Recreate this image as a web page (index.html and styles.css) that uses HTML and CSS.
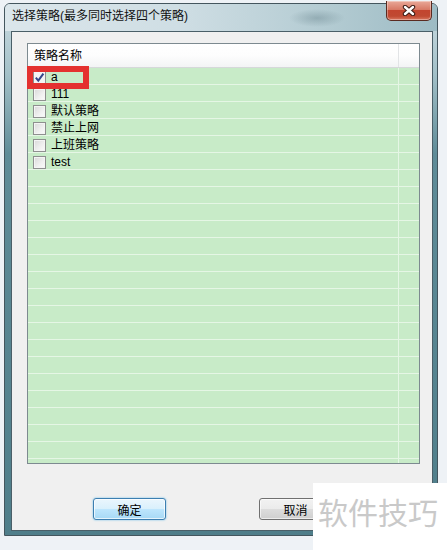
FILE: index.html
```html
<!doctype html>
<html>
<head>
  <meta charset="UTF-8">
  <title>选择策略</title>
  <link rel="stylesheet" href="styles.css">
</head>
<body>
  <div class="window">
    <div class="titlebar">
      <span class="title">选择策略(最多同时选择四个策略)</span>
      <button class="close" title="关闭">
        <svg width="14" height="11" viewBox="0 0 14 11">
          <path d="M3 2 L11 9 M11 2 L3 9" stroke="#3a1a14" stroke-width="4.4" stroke-linecap="round"/>
          <path d="M3 2 L11 9 M11 2 L3 9" stroke="#fff" stroke-width="2.4" stroke-linecap="round"/>
        </svg>
      </button>
    </div>
    <div class="client">
      <div class="list">
        <div class="list-head">
          <span class="col-name">策略名称</span>
          <span class="col-rest"></span>
        </div>
        <div class="list-body">
          <ul class="rows">
            <li class="row"><span class="check checked"><svg width="11" height="11" viewBox="0 0 11 11"><path d="M1.8 5.6 L4.3 8.6 L9.4 1.6" fill="none" stroke="#34478a" stroke-width="2"/></svg></span><span class="name">a</span></li>
            <li class="row"><span class="check"></span><span class="name">111</span></li>
            <li class="row"><span class="check"></span><span class="name">默认策略</span></li>
            <li class="row"><span class="check"></span><span class="name">禁止上网</span></li>
            <li class="row"><span class="check"></span><span class="name">上班策略</span></li>
            <li class="row"><span class="check"></span><span class="name">test</span></li>
          </ul>
          <div class="col-rest"></div>
        </div>
        <div class="mark"></div>
      </div>
      <div class="buttons">
        <button class="btn btn-default">确定</button>
        <button class="btn">取消</button>
      </div>
    </div>
  </div>
  <div class="watermark">软件技巧</div>
</body>
</html>
```

FILE: styles.css
```css
* { box-sizing: border-box }
body {
  margin: 0;
  width: 447px;
  height: 550px;
  background: #eef2f6;
  font: 12px "Liberation Sans", "Noto Sans CJK SC", sans-serif;
  color: #000;
  overflow: hidden
}

/* glass frame */
.window {
  margin: 3px 0 0 4px;
  width: 434px;
  height: 533px;
  border: 1px solid #44565e;
  border-radius: 6px 6px 0 0;
  background: linear-gradient(to bottom, #cddde3 0, #a3c0c8 70px, #5f8c98 150px, #4f7e8a 100%);
  display: flex;
  flex-direction: column
}
.titlebar {
  height: 27px;
  display: flex;
  align-items: flex-start;
  padding-left: 7px;
  border-radius: 5px 5px 0 0;
  background:
    radial-gradient(ellipse 28px 9px at 312px 14px, rgba(70, 100, 110, .3), transparent),
    linear-gradient(to right, #dbe6eb 0, #cfdee4 40%, #b3cbd2 75%, #9dbbc4 100%)
}
.title {
  line-height: 22px;
  padding-top: 1px;
  color: #111
}
.close {
  margin: -3px 5px 0 auto;
  width: 46px;
  height: 20px;
  padding: 0;
  border: 1px solid #5a2a20;
  border-top: 0;
  border-radius: 0 0 5px 5px;
  background: linear-gradient(to bottom, #e9a999 0, #d87a66 45%, #c2452f 50%, #c04a32 80%, #d9775f 100%);
  box-shadow: inset 0 0 0 1px rgba(255, 255, 255, .35);
  display: flex;
  align-items: center;
  justify-content: center
}

/* dialog client area */
.client {
  flex: 1;
  margin: 0 4px 4px 6px;
  border: 1px solid #4a5f68;
  background: #f0f0f0;
  padding: 11px 12px 0 15px;
  display: flex;
  flex-direction: column
}
.list {
  position: relative;
  height: 421px;
  border: 1px solid #7d8a90;
  display: flex;
  flex-direction: column
}
.list-head {
  height: 24px;
  display: flex;
  background: linear-gradient(to bottom, #fff 0, #fdfdfd 50%, #f3f4f5 100%);
  border-bottom: 1px solid #d6d8da
}
.list-head .col-name {
  width: 371px;
  padding: 2px 0 0 6px;
  line-height: 21px;
  border-right: 1px solid #e2e4e6
}
.list-body {
  flex: 1;
  display: flex;
  background: repeating-linear-gradient(to bottom, #c8ebc8 0, #c8ebc8 16px, #e5f6e5 16px, #e5f6e5 17px)
}
.rows {
  width: 371px;
  margin: 0;
  padding: 0;
  list-style: none;
  border-right: 1px solid #e5f6e5
}
.row {
  height: 17px;
  padding-left: 5px;
  display: flex;
  align-items: center;
  gap: 5px
}
.name {
  line-height: 15px;
  padding-top: 2px
}
.check {
  width: 13px;
  height: 13px;
  margin-top: 1px;
  border: 1px solid #8e8f8f;
  background: linear-gradient(135deg, #d8d8d8 0, #f0f0f0 60%, #fbfbfb 100%);
  box-shadow: inset 0 0 0 1px #f4f4f4;
  display: flex;
  align-items: center;
  justify-content: center
}
.checked { background: #f4f4f4 }

/* red highlight round the first entry */
.mark {
  position: absolute;
  left: -1px;
  top: 22px;
  width: 62px;
  height: 23px;
  border: 6px solid #e4312f
}

.buttons {
  margin-top: 34px;
  padding-left: 66px;
  display: flex;
  gap: 93px
}
.btn {
  width: 73px;
  height: 22px;
  padding: 0;
  font: inherit;
  color: #000;
  border: 1px solid #707070;
  border-radius: 3px;
  background: linear-gradient(to bottom, #f2f2f2 0, #ebebeb 50%, #dddddd 50%, #cfcfcf 100%);
  box-shadow: inset 0 0 0 1px rgba(255, 255, 255, .6)
}
.btn-default {
  border-color: #3c7fb1;
  background: linear-gradient(to bottom, #eaf6fd 0, #d9f0fc 50%, #bee6fd 50%, #a7d9f5 100%);
  box-shadow: inset 0 0 0 1px rgba(255, 255, 255, .7), 0 0 2px #5fb8e8
}

.watermark {
  position: absolute;
  left: 313px;
  top: 483px;
  width: 134px;
  height: 67px;
  background: #fff;
  color: #c9c9c9;
  font: 30px "Noto Sans CJK SC", sans-serif;
  line-height: 56px;
  padding-left: 5px;
  white-space: nowrap
}
```
